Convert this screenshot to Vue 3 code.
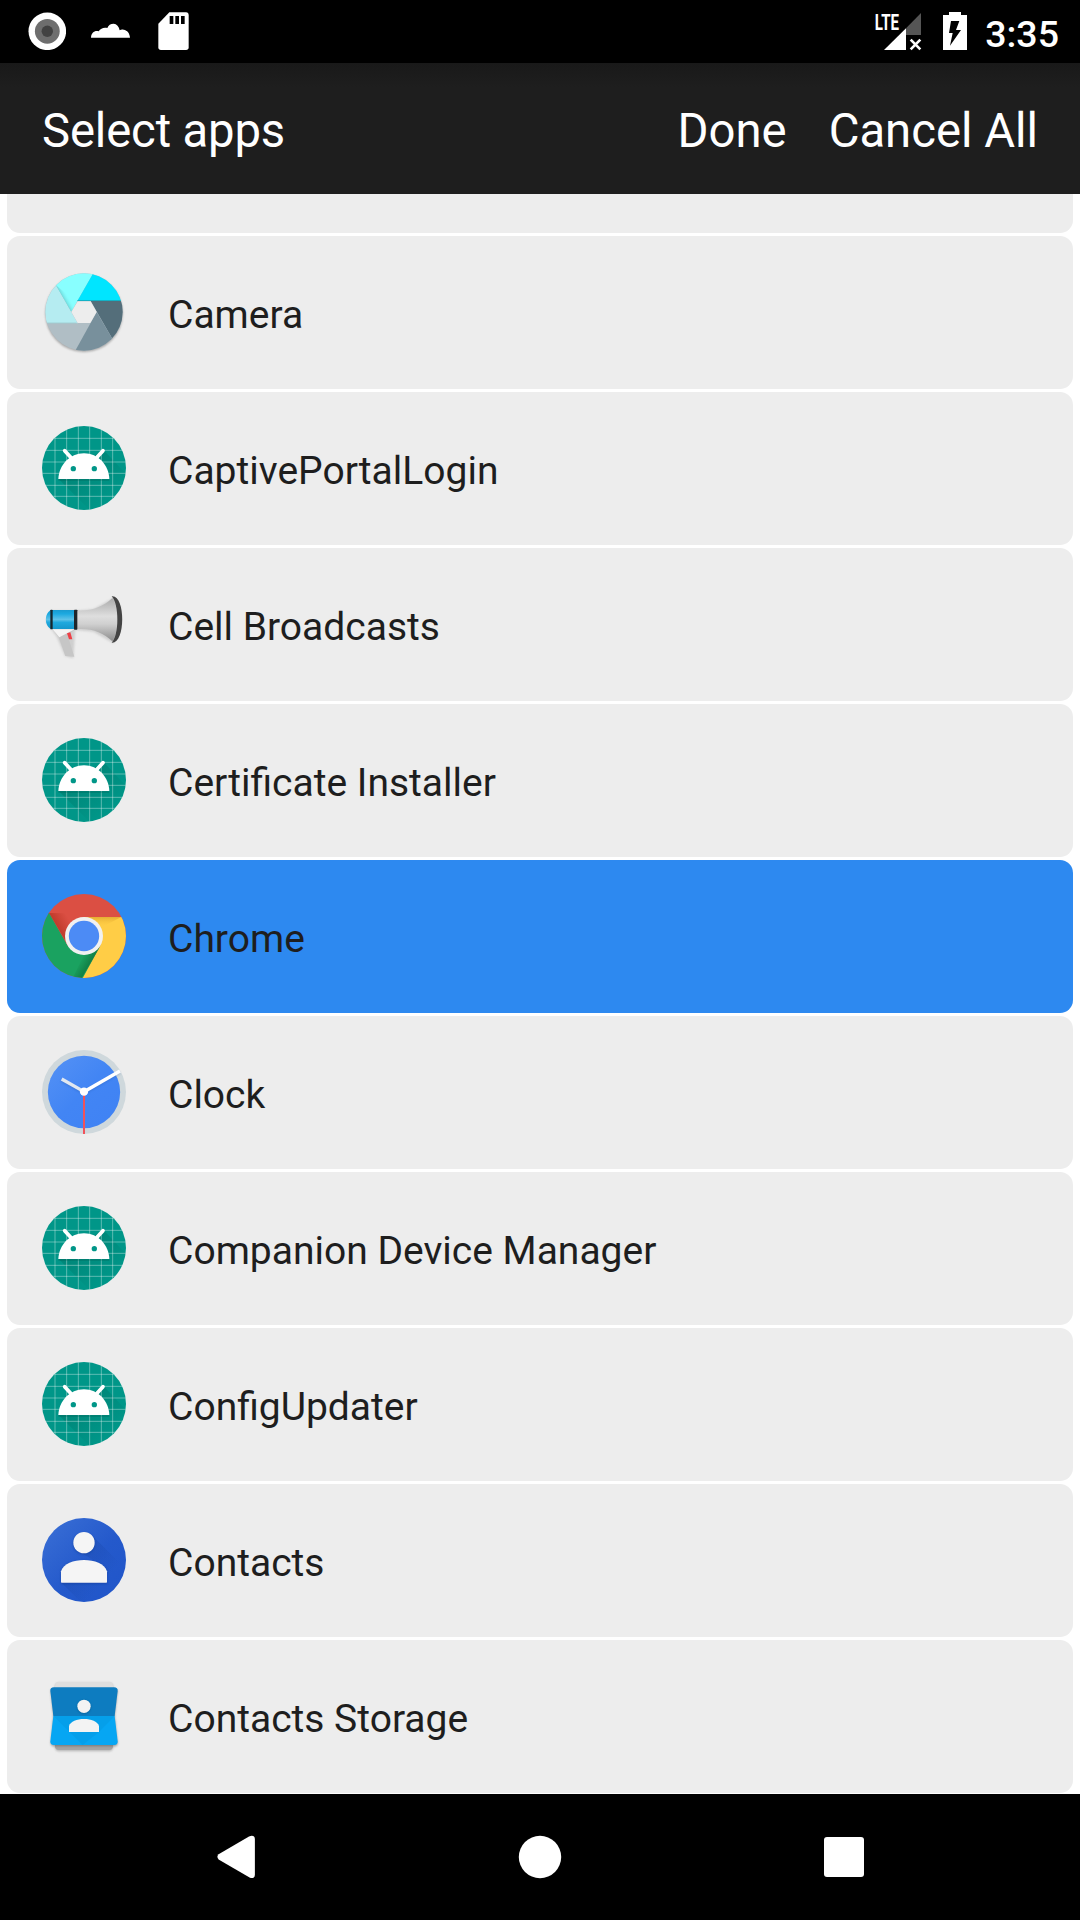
<script setup>
const apps = [
  { name: 'Camera', icon: 'camera' },
  { name: 'CaptivePortalLogin', icon: 'android' },
  { name: 'Cell Broadcasts', icon: 'broadcast' },
  { name: 'Certificate Installer', icon: 'android' },
  { name: 'Chrome', icon: 'chrome', selected: true },
  { name: 'Clock', icon: 'clock' },
  { name: 'Companion Device Manager', icon: 'android' },
  { name: 'ConfigUpdater', icon: 'android' },
  { name: 'Contacts', icon: 'contacts' },
  { name: 'Contacts Storage', icon: 'storage' },
]
</script>

<template>
  <div class="screen">
    <svg class="defs" width="0" height="0">
      <defs>
        <filter id="soft" x="-20%" y="-20%" width="140%" height="140%"><feGaussianBlur stdDeviation="3" /></filter>
        <clipPath id="camClip"><circle cx="162" cy="156" r="116" /></clipPath>
        <clipPath id="andClip"><circle cx="162" cy="159" r="126" /></clipPath>
        <clipPath id="chrClip"><circle cx="162" cy="168" r="126" /></clipPath>
        <clipPath id="conClip"><circle cx="162" cy="165" r="126" /></clipPath>
        <linearGradient id="andShade" gradientUnits="userSpaceOnUse" x1="120" y1="130" x2="220" y2="260">
          <stop offset="0" stop-color="#004d40" stop-opacity=".28" /><stop offset="1" stop-color="#004d40" stop-opacity="0" />
        </linearGradient>
        <linearGradient id="horn" x1="0" y1="0" x2="0" y2="1">
          <stop offset="0" stop-color="#aaa" /><stop offset=".42" stop-color="#dedede" /><stop offset=".6" stop-color="#d0d0d0" /><stop offset="1" stop-color="#8c8c8c" />
        </linearGradient>
        <linearGradient id="tube" x1="0" y1="0" x2="0" y2="1">
          <stop offset="0" stop-color="#1a9bd0" /><stop offset=".2" stop-color="#1ca9e0" /><stop offset=".5" stop-color="#5ec2e8" /><stop offset=".65" stop-color="#1fa9de" /><stop offset="1" stop-color="#1597cc" />
        </linearGradient>
        <linearGradient id="chRedEdge" gradientUnits="userSpaceOnUse" x1="84" y1="145" x2="120" y2="124">
          <stop offset="0" stop-color="#a52714" stop-opacity=".5" /><stop offset="1" stop-color="#a52714" stop-opacity="0" />
        </linearGradient>
        <linearGradient id="chYel" gradientUnits="userSpaceOnUse" x1="0" y1="110" x2="0" y2="140">
          <stop offset="0" stop-color="#d79b2a" stop-opacity=".7" /><stop offset="1" stop-color="#ffcd40" stop-opacity="0" />
        </linearGradient>
        <linearGradient id="chGrn" gradientUnits="userSpaceOnUse" x1="183" y1="246" x2="156" y2="230">
          <stop offset="0" stop-color="#055524" stop-opacity=".45" /><stop offset="1" stop-color="#055524" stop-opacity="0" />
        </linearGradient>
        <linearGradient id="conBg" x1="0" y1="0" x2="1" y2="1">
          <stop offset="0" stop-color="#3b70d6" /><stop offset=".55" stop-color="#2459cb" /><stop offset="1" stop-color="#2055c9" />
        </linearGradient>
        <linearGradient id="conShade" gradientUnits="userSpaceOnUse" x1="140" y1="130" x2="240" y2="210">
          <stop offset="0" stop-color="#123a8f" stop-opacity=".28" /><stop offset="1" stop-color="#123a8f" stop-opacity="0" />
        </linearGradient>
        <linearGradient id="clkBg" x1="0" y1="0" x2="1" y2="1">
          <stop offset="0" stop-color="#5592f5" /><stop offset=".5" stop-color="#4285f4" /><stop offset="1" stop-color="#3f82f4" />
        </linearGradient>
        <linearGradient id="camFold" gradientUnits="userSpaceOnUse" x1="101" y1="115" x2="115" y2="107">
          <stop offset="0" stop-color="#4aa6aa" stop-opacity=".4" /><stop offset="1" stop-color="#8ff" stop-opacity="0" />
        </linearGradient>
      </defs>
    </svg>

    <header class="status">
      <svg class="st-rec" width="38" height="38" viewBox="0 0 38 38">
        <circle cx="19.3" cy="19.3" r="18.8" fill="#fff" /><circle cx="19.3" cy="19.3" r="12.4" fill="#6e6e6e" /><circle cx="19.3" cy="19.3" r="5.7" fill="#424242" />
      </svg>
      <svg class="st-cloud" width="39" height="38" viewBox="273 36 117 114">
        <path d="M273 113C274 99 283 91 296 94C302 84 313 81 322 84C325 75 332 71 341 71C350 72 357 79 359 91C363 88 367 88 371 89C382 91 389 99 390 113Z" fill="#fff" />
      </svg>
      <svg class="st-sd" width="31" height="38" viewBox="474 36 93 114">
        <path d="M508 37H558Q566 37 566 46V142Q566 150 558 150H483Q475 150 475 142V71Z" fill="#fff" />
        <path d="M509 48h11v24h-11zM526 48h11v24h-11zM543 48h11v24h-11z" fill="#000" />
      </svg>
      <span class="grow"></span>
      <svg class="st-signal" width="49" height="46" viewBox="702 15 147 138">
        <path d="M843 39V105H798V85Z" fill="#555" />
        <path d="M732 150L798 85V150Z" fill="#fff" />
        <path d="M812 119L841 148M841 119L812 148" stroke="#fff" stroke-width="8" />
        <text x="704" y="89" font-size="68" font-weight="700" textLength="73" lengthAdjust="spacingAndGlyphs" fill="#fff">LTE</text>
      </svg>
      <svg class="st-batt" width="26" height="40" viewBox="906 33 78 120">
        <path d="M927 36H963V45H981V150H909V45H927Z" fill="#fff" />
        <path d="M933 63H958L948 90H963L930 137L938 99H927Z" fill="#000" />
      </svg>
      <span class="time">3:35</span>
    </header>

    <nav class="toolbar">
      <span class="title">Select apps</span>
      <span class="action">Done</span>
      <span class="action">Cancel All</span>
    </nav>

    <main class="list">
      <div class="row partial"></div>
      <div v-for="app in apps" :key="app.name" class="row" :class="{ selected: app.selected }">
        <svg v-if="app.icon === 'camera'" class="icon" viewBox="36 30 252 252">
          <circle cx="162" cy="160" r="116" fill="#777" opacity=".6" filter="url(#soft)" />
          <g clip-path="url(#camClip)">
            <rect x="40" y="30" width="250" height="250" fill="#b0bec5" />
            <path d="M70 60L78 76L143 190H30V60Z" fill="#b5ecf1" />
            <path d="M78 76L60 30H197L188 43L124 155Z" fill="#8ff" />
            <path d="M78 76L124 155L140 126Z" fill="url(#camFold)" />
            <path d="M188 43L200 30H290V123H142Z" fill="#00e5ff" />
            <path d="M182 123H290V250L247 236Z" fill="#546e7a" />
            <path d="M200 156L247 236L260 290H126L137 270Z" fill="#78909c" />
            <path d="M142 122H280" stroke="#238b99" stroke-width="2" />
            <path d="M45 189H140" stroke="#8fb5ba" stroke-width="1.5" />
          </g>
          <path d="M143 124H182L200 156L181 189H143L124 156Z" fill="#ededed" />
        </svg>

        <svg v-else-if="app.icon === 'android'" class="icon" viewBox="36 33 252 252">
          <circle cx="162" cy="159" r="126" fill="#009688" />
          <g clip-path="url(#andClip)">
            <path d="M86 192L220 104L300 190V300H194Z" fill="url(#andShade)" />
            <path d="M75 33V285M110 33V285M145 33V285M179 33V285M214 33V285M248 33V285M36 70H288M36 106H288M36 141H288M36 175H288M36 211H288M36 244H288" stroke="#fff" stroke-opacity=".5" stroke-width="2.2" />
          </g>
          <path d="M85 195H238" stroke="#00574d" stroke-width="3" opacity=".45" />
          <path d="M85 192C87 150 119 115 162 115S236 150 238 192Z" fill="#fff" />
          <path d="M104 107L122 127M219 107L201 127" stroke="#fff" stroke-width="11" stroke-linecap="round" />
          <circle cx="130" cy="161" r="8" fill="#009688" /><circle cx="193" cy="161" r="8" fill="#009688" />
        </svg>

        <svg v-else-if="app.icon === 'broadcast'" class="icon" viewBox="36 36 252 252">
          <path d="M48 155L64 122H135L190 118L250 84L272 110V180L250 220L190 185L136 180L130 265L105 258L80 200Z" fill="#777" opacity=".25" filter="url(#soft)" />
          <path d="M70 178H136L113 196L133 260L106 258L86 202Z" fill="#c6c6c6" />
          <path d="M68 178H134L88 202Z" fill="#f4f4f4" />
          <path d="M111 190L121 187L127 208H117Z" fill="#ee3f46" />
          <path d="M64 120C42 128 42 169 64 177Z" fill="url(#tube)" />
          <rect x="63" y="120" width="72" height="57" fill="url(#tube)" />
          <rect x="61" y="119" width="7" height="59" rx="2" fill="#17262d" />
          <path d="M138 121C185 124 218 111 247 84C266 104 266 194 247 214C218 187 185 174 138 178Z" fill="url(#horn)" />
          <rect x="132" y="119" width="10" height="60" rx="2" fill="#20262a" />
          <path d="M245 79C287 73 288 222 245 218C268 195 268 103 245 79Z" fill="#444" />
        </svg>

        <svg v-else-if="app.icon === 'chrome'" class="icon" viewBox="36 42 252 252">
          <g clip-path="url(#chrClip)">
            <rect x="36" y="42" width="252" height="252" fill="#db4f43" />
            <path d="M57 99L110 188L162 140V111L120 100Z" fill="url(#chRedEdge)" />
            <path d="M162 111H300V300H153L211 197Z" fill="#ffcd46" />
            <path d="M162 111H274L218 140Z" fill="url(#chYel)" />
            <path d="M57 99L20 80V300H155L211 197L162 224L113 197Z" fill="#1aa260" />
            <path d="M155 294L208 203L164 220L130 290Z" fill="url(#chGrn)" />
          </g>
          <circle cx="162" cy="168" r="57" fill="#f1f1f1" /><circle cx="162" cy="168" r="45.5" fill="#4c8bf5" />
        </svg>

        <svg v-else-if="app.icon === 'clock'" class="icon" viewBox="36 36 252 252">
          <circle cx="162" cy="162" r="126" fill="#cfd8dc" /><circle cx="162" cy="162" r="108.5" fill="url(#clkBg)" />
          <path d="M162 165L270 103M162 165L94 127" stroke="#1b478f" stroke-width="8" opacity=".25" filter="url(#soft)" />
          <path d="M162 161L95 123" stroke="#e1e8f0" stroke-width="10" />
          <path d="M162 161L270 99" stroke="#fff" stroke-width="10.5" />
          <path d="M162 165V288" stroke="#f0525a" stroke-width="6" />
          <circle cx="162" cy="161" r="12.5" fill="#fff" />
        </svg>

        <svg v-else-if="app.icon === 'contacts'" class="icon" viewBox="36 39 252 252">
          <circle cx="162" cy="165" r="126" fill="url(#conBg)" />
          <g clip-path="url(#conClip)">
            <path d="M138 135L184 89L300 205V300H162L94 233L190 165Z" fill="url(#conShade)" />
            <circle cx="162" cy="116" r="32" fill="#123a8f" opacity=".5" filter="url(#soft)" />
            <path d="M93 236V199C101 177 130 167 162 167S223 177 231 199V236Z" fill="#123a8f" opacity=".5" filter="url(#soft)" />
          </g>
          <circle cx="162" cy="113" r="32" fill="#f5f5f5" />
          <path d="M93 231V199C101 175 130 165 162 165S223 175 231 199V231Q231 233 229 233H95Q93 233 93 231Z" fill="#f5f5f5" />
        </svg>

        <svg v-else class="icon" viewBox="36 42 252 252">
          <rect x="75" y="68" width="174" height="206" rx="12" fill="#666" opacity=".4" filter="url(#soft)" />
          <rect x="75" y="66" width="174" height="50" rx="12" fill="#dedede" />
          <rect x="75" y="230" width="174" height="40" rx="12" fill="#a5a5a5" />
          <path d="M62 90L70 168L62 250Q64 262 78 259H248Q262 262 263 250L254 168L263 90" fill="#555" opacity=".5" filter="url(#soft)" />
          <path d="M70 168L61 93Q60 82 72 82H252Q264 82 263 93L254 168Z" fill="#0d7cc0" />
          <path d="M70 168H254L263 244Q264 255 252 255H72Q60 255 61 244Z" fill="#06a6f3" />
          <path d="M70 168L158 255L207 216L254 168Z" fill="#087fc4" opacity=".18" />
          <circle cx="162" cy="141" r="20" fill="#064a78" opacity=".5" filter="url(#soft)" />
          <circle cx="162" cy="139" r="20" fill="#f3f3f3" />
          <path d="M117 216V198C122 184 140 177 162 177S202 184 207 198V216Z" fill="#f3f3f3" />
        </svg>
        <span class="name">{{ app.name }}</span>
      </div>
    </main>

    <footer class="navbar">
      <svg width="44" height="44" viewBox="0 0 44 44"><path d="M4.6 19.2L35 1.4Q40.5 -.5 40.9 4V40Q40.5 44 36 42.8L4.6 24.4Q2.2 21.8 4.6 19.2Z" fill="#fff" /></svg>
      <svg width="44" height="44" viewBox="0 0 44 44"><circle cx="22" cy="22" r="21.2" fill="#fff" /></svg>
      <svg width="44" height="44" viewBox="0 0 44 44"><rect x="2" y="2" width="40" height="40" rx="3" fill="#fff" /></svg>
    </footer>
  </div>
</template>

<style>
body { margin: 0; background: #fff; }
</style>

<style scoped>
.screen {
  width: 1080px;
  height: 1920px;
  display: flex;
  flex-direction: column;
  overflow: hidden;
  background: #fff;
  font-family: Roboto, "Liberation Sans", sans-serif;
}
.defs { position: absolute; }
svg { display: block; flex: none; }
.status {
  height: 63px;
  flex: none;
  display: flex;
  align-items: flex-start;
  box-sizing: border-box;
  padding: 12px 21px 0 28px;
  background: #000;
  color: #fff;
}
.st-cloud { margin-left: 25px; }
.st-sd { margin-left: 28px; }
.grow { flex: 1; }
.st-signal { margin-top: -7px; margin-right: 19px; }
.st-batt { margin-top: -1px; margin-right: 17px; }
.time { font-size: 37.5px; font-weight: 500; line-height: 44px; }
.toolbar {
  height: 131px;
  flex: none;
  box-sizing: border-box;
  display: flex;
  align-items: center;
  gap: 42px;
  padding: 5px 42px 0;
  background: linear-gradient(#191919, #1e1e1e 24px);
  color: #fff;
  font-size: 47.25px;
}
.title { flex: 1; letter-spacing: -0.15px; }
.list {
  height: 1600px;
  flex: none;
  box-sizing: border-box;
  display: flex;
  flex-direction: column;
  gap: 3px;
  padding: 0 7px;
}
.row {
  height: 153px;
  flex: none;
  box-sizing: border-box;
  display: flex;
  align-items: center;
  gap: 42px;
  padding: 0 35px 1px;
  border-radius: 13px;
  background: #ededed;
  color: #1e1e1e;
}
.row.partial { height: 39px; border-radius: 0 0 13px 13px; }
.row.selected { background: #2d89f0; }
.icon { width: 84px; height: 84px; }
.name { font-size: 39px; padding-top: 5px; }
.navbar {
  height: 126px;
  flex: none;
  box-sizing: border-box;
  display: flex;
  justify-content: space-between;
  align-items: center;
  padding: 0 214px;
  background: #000;
}
</style>
